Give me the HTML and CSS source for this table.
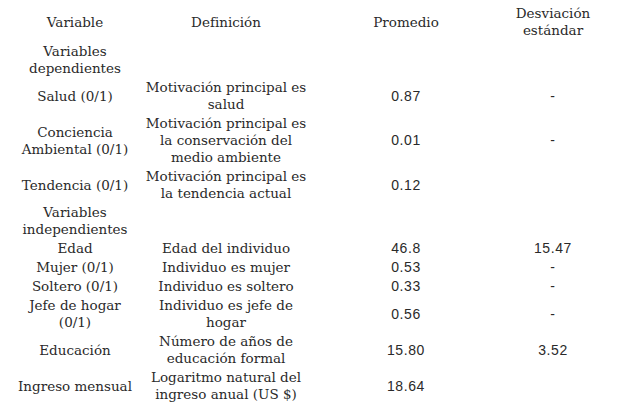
FILE: index.html
```html
<!DOCTYPE html>
<html lang="es">
<head>
<meta charset="utf-8">
<link rel="stylesheet" href="styles.css">
</head>
<body>
<table class="tbl">
  <colgroup>
    <col class="c1"><col class="c2"><col class="c3"><col class="c4">
  </colgroup>
  <thead>
    <tr class="head">
      <th>Variable</th>
      <th>Definición</th>
      <th>Promedio</th>
      <th>Desviación<br>estándar</th>
    </tr>
  </thead>
  <tbody>
    <tr><td>Variables<br>dependientes</td><td></td><td></td><td></td></tr>
    <tr><td>Salud (0/1)</td><td>Motivación principal es<br>salud</td><td class="num">0.87</td><td class="num">-</td></tr>
    <tr><td>Conciencia<br>Ambiental (0/1)</td><td>Motivación principal es<br>la conservación del<br>medio ambiente</td><td class="num">0.01</td><td class="num">-</td></tr>
    <tr><td>Tendencia (0/1)</td><td>Motivación principal es<br>la tendencia actual</td><td class="num">0.12</td><td class="num"></td></tr>
    <tr><td>Variables<br>independientes</td><td></td><td></td><td></td></tr>
    <tr><td>Edad</td><td>Edad del individuo</td><td class="num">46.8</td><td class="num">15.47</td></tr>
    <tr><td>Mujer (0/1)</td><td>Individuo es mujer</td><td class="num">0.53</td><td class="num">-</td></tr>
    <tr><td>Soltero (0/1)</td><td>Individuo es soltero</td><td class="num">0.33</td><td class="num">-</td></tr>
    <tr><td>Jefe de hogar<br>(0/1)</td><td>Individuo es jefe de<br>hogar</td><td class="num">0.56</td><td class="num">-</td></tr>
    <tr><td>Educación</td><td>Número de años de<br>educación formal</td><td class="num">15.80</td><td class="num">3.52</td></tr>
    <tr><td>Ingreso mensual</td><td>Logaritmo natural del<br>ingreso anual (US $)</td><td class="num">18.64</td><td class="num"></td></tr>
  </tbody>
</table>
</body>
</html>
```
FILE: styles.css
```css
html, body {
  margin: 0;
  padding: 0;
  background: #ffffff;
}
body {
  padding: 4px 8px 0 8px;
  font-family: "DejaVu Serif", serif;
  font-size: 13.5px;
  color: #2a2a2a;
}
.tbl {
  border-collapse: collapse;
  table-layout: fixed;
  width: 596px;
}
.c1 { width: 134px; }
.c2 { width: 168px; }
.c3 { width: 192px; }
.c4 { width: 102px; }
.tbl th, .tbl td {
  padding: 1px 0;
  text-align: center;
  vertical-align: middle;
  font-weight: normal;
  line-height: 17px;
}
.head th {
  padding-bottom: 3px;
}
.num {
  font-family: "Liberation Sans", Arial, sans-serif;
  font-size: 14px;
  letter-spacing: 0.6px;
}
```
